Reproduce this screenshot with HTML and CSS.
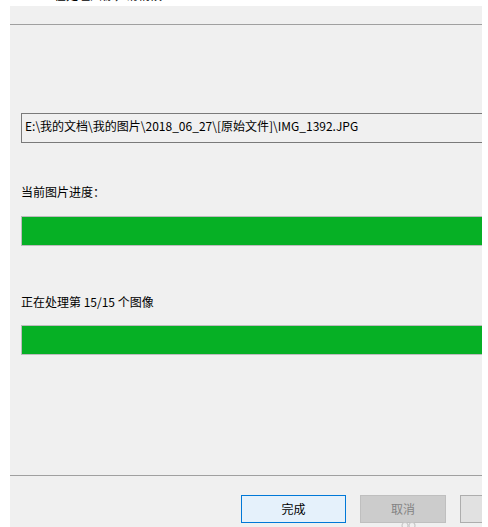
FILE: index.html
```html
<!DOCTYPE html>
<html lang="zh-CN">
<head>
<meta charset="utf-8">
<title>处理进度</title>
<link rel="stylesheet" href="styles.css">
</head>
<body>
<div class="window">
  <div class="header">
    <span class="header-text">正在处理图像，请稍候</span>
  </div>
  <div class="content">
    <div class="path-box">E:\我的文档\我的图片\2018_06_27\[原始文件]\IMG_1392.JPG</div>
    <div class="label label-first">当前图片进度：</div>
    <div class="bar"><div class="bar-fill" style="width:100%"></div></div>
    <div class="label label-second">正在处理第 15/15 个图像</div>
    <div class="bar bar-second"><div class="bar-fill" style="width:100%"></div></div>
  </div>
  <div class="footer">
    <button class="btn btn-primary">完成</button>
    <button class="btn btn-disabled">取消</button>
    <button class="btn btn-normal"></button>
    <svg class="cursor-mark" width="16" height="6" viewBox="0 0 16 6"><circle cx="4" cy="4.5" r="3" fill="none" stroke="#c8c8c8" stroke-width="1.2"/><circle cx="11" cy="4.5" r="3" fill="none" stroke="#c8c8c8" stroke-width="1.2"/></svg>
  </div>
</div>
</body>
</html>
```
FILE: styles.css
```css
html, body {
  margin: 0;
  padding: 0;
  background: #ffffff;
}
body {
  width: 488px;
  height: 527px;
  overflow: hidden;
  font-family: "Noto Sans CJK SC", "Noto Sans", sans-serif;
  font-size: 12px;
  color: #000;
}
.window {
  margin-left: 10px;
  width: 472px;
  height: 527px;
  display: flex;
  flex-direction: column;
  overflow: hidden;
  position: relative;
  background: #f0f0f0;
}
.header {
  height: 25px;
  box-sizing: border-box;
  border-bottom: 1px solid #a0a0a0;
  background: linear-gradient(#ffffff 0, #ffffff 6px, #f0f0f0 6px);
  overflow: hidden;
  padding-left: 32px;
}
.header-text {
  display: block;
  line-height: 16px;
  margin-top: -13px;
  color: #000;
}
.content {
  height: 451px;
  box-sizing: border-box;
  border-bottom: 1px solid #a0a0a0;
  padding: 88px 0 0 11px;
  display: flex;
  flex-direction: column;
}
.path-box {
  width: 480px;
  height: 30px;
  box-sizing: border-box;
  border: 1px solid #7a7a7a;
  background: #f0f0f0;
  padding: 2px 0 0 3px;
  line-height: 20px;
  white-space: nowrap;
  color: #000;
}
.label {
  line-height: 16px;
  height: 16px;
  white-space: nowrap;
}
.label-first {
  margin-top: 41px;
}
.label-second {
  margin-top: 48px;
}
.bar {
  width: 480px;
  height: 30px;
  box-sizing: border-box;
  border: 1px solid #bcbcbc;
  background: #e6e6e6;
  margin-top: 16px;
}
.bar-second {
  margin-top: 15px;
}
.bar-fill {
  height: 100%;
  background: #06b025;
}
.footer {
  flex: 1;
  display: flex;
  align-items: flex-start;
  gap: 14px;
  padding: 19px 0 0 231px;
  position: relative;
}
.btn {
  flex: none;
  height: 28px;
  box-sizing: border-box;
  font-family: inherit;
  font-size: 12px;
  padding: 0;
  margin: 0;
  line-height: 26px;
}
.btn-primary {
  width: 105px;
  border: 1px solid #0078d7;
  background: #e5f1fb;
  color: #000;
}
.btn-disabled {
  width: 86px;
  border: 1px solid #bfbfbf;
  background: #cccccc;
  color: #838383;
}
.btn-normal {
  width: 86px;
  border: 1px solid #adadad;
  background: #e1e1e1;
}
.cursor-mark {
  position: absolute;
  left: 391px;
  top: 45px;
}
```
